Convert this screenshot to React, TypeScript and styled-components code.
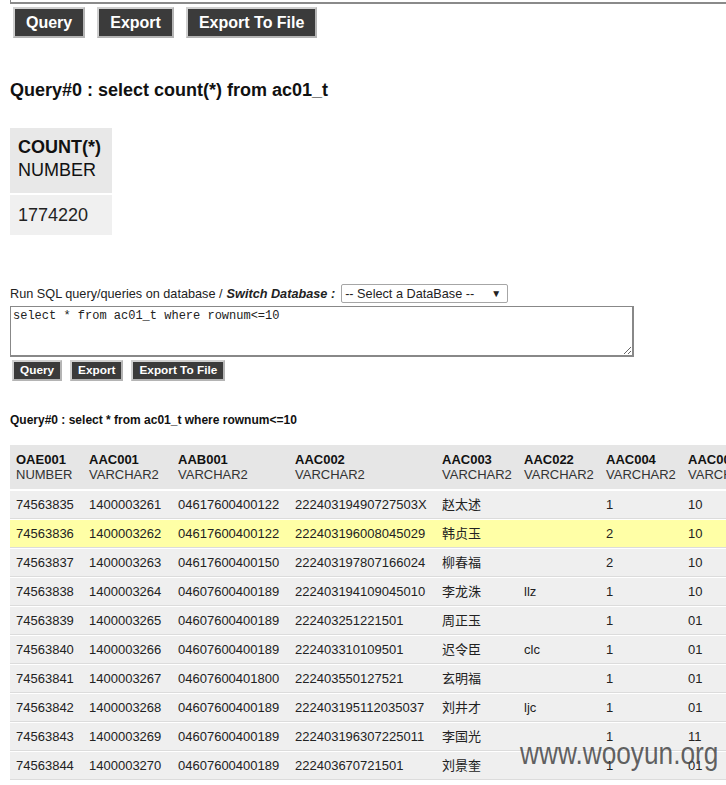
import React from "react";
import styled, { createGlobalStyle } from "styled-components";

const Global = createGlobalStyle`
  html, body { margin: 0; padding: 0; background: #fff; overflow: hidden; }
  body { font-family: "Liberation Sans", Arial, sans-serif; color: #222; }
`;

const Page = styled.div`
  position: relative;
  width: 726px;
  height: 785px;
  overflow: hidden;
  padding-left: 10px;
  box-sizing: border-box;
`;

const EditorEdge = styled.div`
  height: 4px;
  width: 740px;
  border: 1px solid #8a8a8a;
  border-top: none;
  border-bottom: 2px solid #8a8a8a;
  box-sizing: border-box;
`;

const ButtonRow = styled.div<{ $big?: boolean }>`
  display: flex;
  gap: ${(p) => (p.$big ? "12px" : "8px")};
  margin-top: 3px;
  padding-left: ${(p) => (p.$big ? "3px" : "2px")};
`;

const Btn = styled.button<{ $big?: boolean }>`
  background: #3b3b3b;
  color: #fff;
  font-family: "Liberation Sans", Arial, sans-serif;
  font-weight: bold;
  font-size: ${(p) => (p.$big ? "16px" : "11.8px")};
  height: ${(p) => (p.$big ? "31px" : "21px")};
  padding: 0 ${(p) => (p.$big ? "11px" : "6px")};
  border: 2px solid #b4b4b4;
  border-top-color: #d0d0d0;
  border-left-color: #d0d0d0;
  box-sizing: border-box;
  line-height: 1;
  cursor: pointer;
`;

const Heading = styled.div<{ $big?: boolean }>`
  font-weight: bold;
  color: #111;
  font-size: ${(p) => (p.$big ? "18px" : "12px")};
  line-height: ${(p) => (p.$big ? "21px" : "14px")};
  margin-top: ${(p) => (p.$big ? "42px" : "32px")};
`;

const CountTable = styled.table`
  margin-top: 25px;
  border-collapse: separate;
  border-spacing: 0 2px;
  font-size: 18px;
`;

const CountHead = styled.th`
  background: #e8e8e8;
  text-align: left;
  padding: 8px 11px 11px 8px;
  line-height: 23px;
  font-weight: normal;
  color: #111;
  b { font-weight: bold; }
`;

const CountCell = styled.td`
  background: #f0f0f0;
  padding: 9px 11px 9px 8px;
  line-height: 22px;
`;

const RunLine = styled.div`
  display: flex;
  align-items: center;
  margin-top: 47px;
  font-size: 12.7px;
  height: 19px;
  i { font-weight: bold; margin-left: 4px; margin-right: 6px; }
`;

const Select = styled.div`
  width: 167px;
  height: 19px;
  border: 1px solid #a6a6a6;
  border-radius: 2px;
  box-sizing: border-box;
  display: flex;
  align-items: center;
  justify-content: space-between;
  padding: 0 6px 0 3px;
  font-size: 12.7px;
  color: #222;
  background: #fff;
`;

const Arrow = styled.span`
  font-size: 10px;
`;

const Editor = styled.textarea`
  display: block;
  width: 624px;
  height: 51px;
  margin-top: 3px;
  border: 1px solid #888;
  border-right-width: 2px;
  border-bottom-width: 2px;
  box-sizing: border-box;
  padding: 2px 2px;
  font-family: "Liberation Mono", "Courier New", monospace;
  font-size: 12px;
  line-height: 14px;
  color: #222;
  resize: both;
  outline: none;
`;

const DataTable = styled.table<{ $w: number }>`
  margin-top: 18px;
  border-collapse: separate;
  border-spacing: 0;
  font-size: 13px;
  table-layout: fixed;
  width: ${(p) => p.$w}px;
`;

const HeadCell = styled.th`
  background: #e6e6e6;
  text-align: left;
  font-weight: normal;
  padding: 7px 6px 7px 6px;
  line-height: 15px;
  border-bottom: 1px solid #fff;
  vertical-align: top;
  white-space: nowrap;
  overflow: hidden;
  b { font-weight: bold; color: #111; }
  span { color: #333; }
`;

const Row = styled.tr<{ $hl?: boolean }>`
  background: ${(p) => (p.$hl ? "#ffffa6" : "#efefef")};
`;

const Cell = styled.td`
  padding: 6px 6px 6px 6px;
  height: 15px;
  line-height: 15px;
  border-top: 1px solid #fff;
  border-bottom: 1px solid #dcdcdc;
  white-space: nowrap;
  overflow: hidden;
  color: #222;
  font-family: "Liberation Sans", Arial, "Noto Sans CJK SC", sans-serif;
`;

const Watermark = styled.div`
  position: absolute;
  left: 520px;
  top: 735px;
  font-family: "Liberation Sans", Arial, sans-serif;
  font-size: 32px;
  color: rgba(70, 70, 70, 0.85);
  transform: scaleX(0.82);
  transform-origin: left top;
  white-space: nowrap;
  pointer-events: none;
`;

const cols = [
  ["OAE001", "NUMBER", 73],
  ["AAC001", "VARCHAR2", 89],
  ["AAB001", "VARCHAR2", 117],
  ["AAC002", "VARCHAR2", 147],
  ["AAC003", "VARCHAR2", 82],
  ["AAC022", "VARCHAR2", 82],
  ["AAC004", "VARCHAR2", 82],
  ["AAC005", "VARCHAR2", 90],
  ["AAC006", "VARCHAR2", 90],
] as const;

const tableWidth = cols.reduce((s, c) => s + c[2], 0);

const rows = [
  ["74563835", "1400003261", "04617600400122", "22240319490727503X", "赵太述", "", "1", "10", ""],
  ["74563836", "1400003262", "04617600400122", "222403196008045029", "韩贞玉", "", "2", "10", ""],
  ["74563837", "1400003263", "04617600400150", "222403197807166024", "柳春福", "", "2", "10", ""],
  ["74563838", "1400003264", "04607600400189", "222403194109045010", "李龙洙", "llz", "1", "10", ""],
  ["74563839", "1400003265", "04607600400189", "222403251221501", "周正玉", "", "1", "01", ""],
  ["74563840", "1400003266", "04607600400189", "222403310109501", "迟令臣", "clc", "1", "01", ""],
  ["74563841", "1400003267", "04607600401800", "222403550127521", "玄明福", "", "1", "01", ""],
  ["74563842", "1400003268", "04607600400189", "222403195112035037", "刘井才", "ljc", "1", "01", ""],
  ["74563843", "1400003269", "04607600400189", "222403196307225011", "李国光", "", "1", "11", ""],
  ["74563844", "1400003270", "04607600400189", "222403670721501", "刘景奎", "", "1", "01", ""],
];

export default function App() {
  return (
    <>
      <Global />
      <Page>
        <EditorEdge />
        <ButtonRow $big>
          <Btn $big>Query</Btn>
          <Btn $big>Export</Btn>
          <Btn $big>Export To File</Btn>
        </ButtonRow>
        <Heading $big>Query#0 : select count(*) from ac01_t</Heading>
        <CountTable>
          <thead>
            <tr>
              <CountHead>
                <b>COUNT(*)</b>
                <br />
                NUMBER
              </CountHead>
            </tr>
          </thead>
          <tbody>
            <tr>
              <CountCell>1774220</CountCell>
            </tr>
          </tbody>
        </CountTable>
        <RunLine>
          Run SQL query/queries on database /<i>Switch Database :</i>
          <Select>
            <span>-- Select a DataBase --</span>
            <Arrow>▼</Arrow>
          </Select>
        </RunLine>
        <Editor defaultValue="select * from ac01_t where rownum<=10" />
        <ButtonRow>
          <Btn>Query</Btn>
          <Btn>Export</Btn>
          <Btn>Export To File</Btn>
        </ButtonRow>
        <Heading>Query#0 : select * from ac01_t where rownum&lt;=10</Heading>
        <DataTable $w={tableWidth}>
          <colgroup>
            {cols.map((c) => (
              <col key={c[0]} style={{ width: c[2] }} />
            ))}
          </colgroup>
          <thead>
            <tr>
              {cols.map((c) => (
                <HeadCell key={c[0]}>
                  <b>{c[0]}</b>
                  <br />
                  <span>{c[1]}</span>
                </HeadCell>
              ))}
            </tr>
          </thead>
          <tbody>
            {rows.map((r, i) => (
              <Row key={r[0]} $hl={i === 1}>
                {r.map((v, j) => (
                  <Cell key={j}>{v}</Cell>
                ))}
              </Row>
            ))}
          </tbody>
        </DataTable>
        <Watermark>www.wooyun.org</Watermark>
      </Page>
    </>
  );
}
